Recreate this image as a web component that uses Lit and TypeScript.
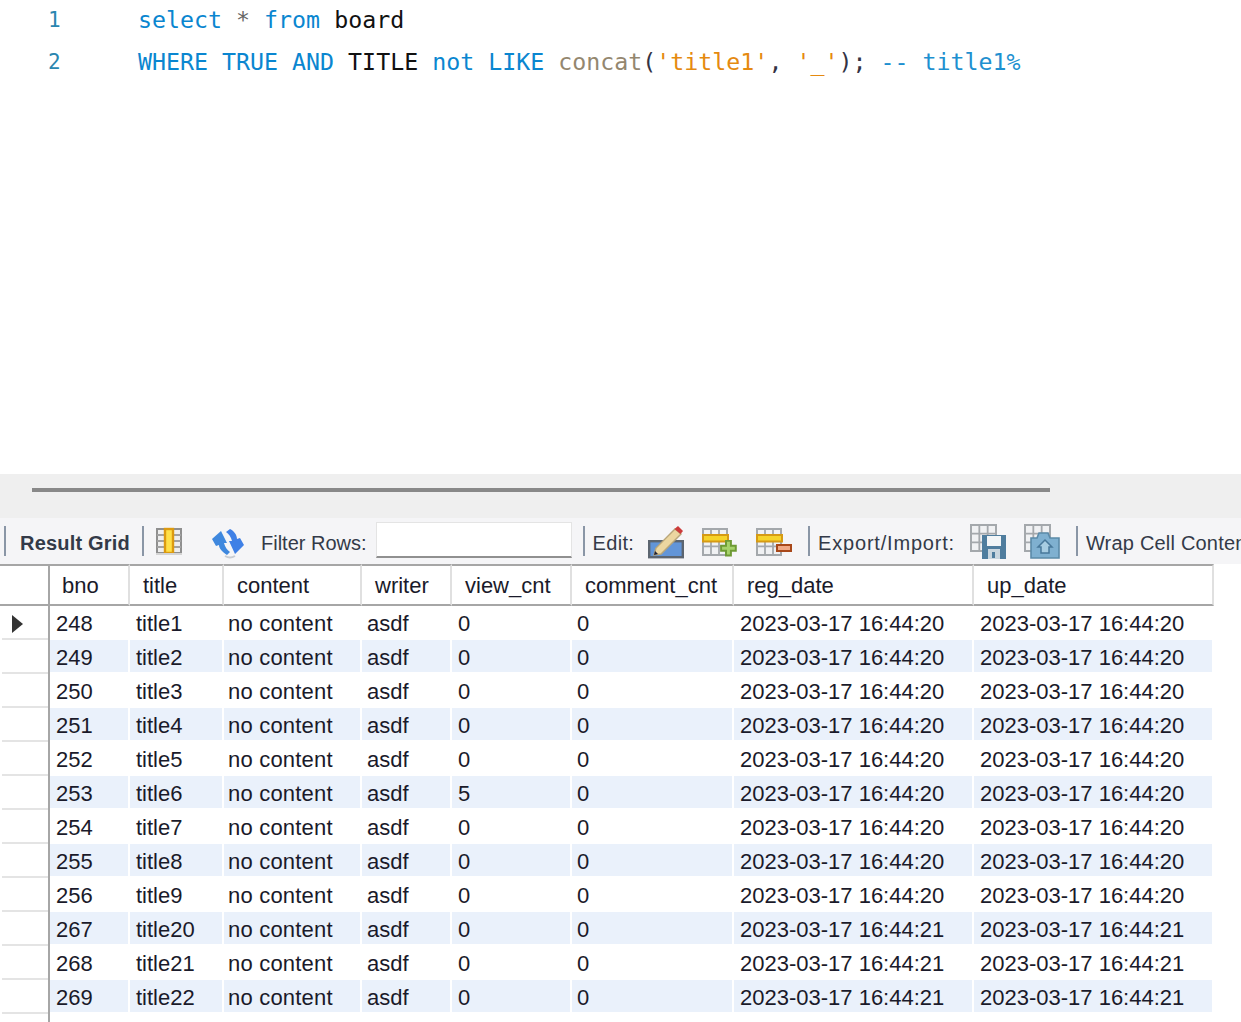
import { LitElement, html, css, svg } from "lit";
import { customElement } from "lit/decorators.js";

const d0 = "2023-03-17 16:44:20";
const d1 = "2023-03-17 16:44:21";
const rows = [
  ["248","title1","0",d0],["249","title2","0",d0],["250","title3","0",d0],["251","title4","0",d0],
  ["252","title5","0",d0],["253","title6","5",d0],["254","title7","0",d0],["255","title8","0",d0],
  ["256","title9","0",d0],["267","title20","0",d1],["268","title21","0",d1],["269","title22","0",d1],
];
const heads = ["bno","title","content","writer","view_cnt","comment_cnt","reg_date","up_date"];

const gridLines = (x:number,y:number,w:number,h:number,c="#a4a8ac") => svg`
  <rect x=${x} y=${y} width=${w} height=${h} fill="#f0f1f3" stroke=${c} stroke-width="2"/>
  <path d="M${x} ${y+h/3}H${x+w}M${x} ${y+2*h/3}H${x+w}M${x+w/3} ${y}V${y+h}M${x+2*w/3} ${y}V${y+h}" stroke=${c} stroke-width="1.8" fill="none"/>`;

const iconGrid = html`<svg width="26" height="36" viewBox="0 0 26 36"><rect x="1" y="5" width="24" height="24" fill="#eee" stroke="#8f8f8f" stroke-width="2"/><path d="M1 11H25M1 17H25M1 23H25" stroke="#a2a2a2" stroke-width="2"/><rect x="9" y="5" width="8" height="24" fill="#ffe048" stroke="#dc9a10" stroke-width="2.4"/><path d="M0 30H26" stroke="#d4d4d4" stroke-width="2"/></svg>`;
const iconRefresh = html`<svg width="32" height="36" viewBox="0 0 32 36"><path d="M0 15 L9 7 L15 19 L12 19 C13 23 15 26 18 28 L15 31 C10 28 7 24 7 21 L4 22 Z" fill="#3f88de"/><path d="M32 21 L23 30 L17 17 L20 17 C19 13 17 10 14 8 L18 5 C22 7 25 11 25 15 L28 14 Z" fill="#3f80e6"/><path d="M13 32 Q18 35 23 32" stroke="#c8ccd2" stroke-width="2" fill="none"/></svg>`;
const iconEdit = html`<svg width="36" height="36" viewBox="0 0 36 36"><rect x="1.2" y="17.2" width="33.6" height="16" fill="#6295d8" stroke="#5c6570" stroke-width="2.4"/><path d="M6 31 L8 24 L27 5 L33 10 L13 30 Z" fill="#ecd6a0" stroke="#b9a679" stroke-width="1.4"/><path d="M6 31 L7 27 L10 30 Z" fill="#223"/><path d="M26.5 5 L30 2 L35 7 L32.5 10 Z" fill="#cc3a3a"/></svg>`;
const iconAdd = html`<svg width="36" height="36" viewBox="0 0 36 36">${gridLines(1,5,24,26)}<rect x="1" y="11" width="25" height="6.5" fill="#f6d32a" stroke="#d69a14" stroke-width="2"/><path d="M25 17h5v5h5v5h-5v5h-5v-5h-5v-5h5z" fill="#a6d26a" stroke="#6e9a34" stroke-width="2" transform="translate(-.5 .2) scale(.98)"/></svg>`;
const iconDel = html`<svg width="36" height="36" viewBox="0 0 36 36">${gridLines(1,5,24,26)}<rect x="1" y="11" width="25" height="6.5" fill="#f6d32a" stroke="#d69a14" stroke-width="2"/><rect x="21" y="21" width="14" height="6" fill="#f0a884" stroke="#a8481a" stroke-width="2"/></svg>`;
const iconExport = html`<svg width="36" height="36" viewBox="0 0 36 36">${gridLines(1,1,25,26)}<path d="M12 11H36V35H12Z" fill="#4f7d9e"/><rect x="17" y="12" width="14" height="10" fill="#f2f5f7"/><rect x="18" y="25" width="12" height="10" fill="#c9d6df"/><rect x="22" y="28" width="3" height="6" fill="#4f7d9e"/></svg>`;
const iconImport = html`<svg width="36" height="36" viewBox="0 0 36 36">${gridLines(1,1,25,26)}<path d="M7 14 H13 L15 9 H24 L26 14 H35 V34 H7 Z" fill="#7fb0d0" stroke="#5b8aa8" stroke-width="1.6"/><path d="M21 16 L28 23 H25 V29 H17 V23 H14 Z" fill="#a8cde2" stroke="#48789a" stroke-width="1.5"/></svg>`;

@customElement("app-root")
export class AppRoot extends LitElement {
  static styles = css`
    :host { display: block; width: 1241px; height: 1022px; overflow: hidden; background: #fff; font-family: "Liberation Sans", Arial, sans-serif; color: #1a1a2a; }
    .editor { height: 474px; box-sizing: border-box; font: 23.27px/42px "DejaVu Sans Mono", monospace; color: #111; }
    .line { display: flex; height: 42px; white-space: pre; position: relative; top: -1px; }
    .num { width: 138px; padding-left: 48px; box-sizing: border-box; color: #2a86b0; font-size: 21px; }
    .kw { color: #0a86d0; } .fn { color: #94876f; } .str { color: #e58a10; } .cm { color: #1e90d0; } .pu { color: #334; } .st { color: #666; }
    .band { height: 44px; background: #efefef; box-sizing: border-box; padding: 14px 191px 0 32px; }
    .split { height: 4px; background: #888; }
    .toolbar { height: 46px; box-sizing: border-box; padding-top: 2px; background: #f5f5f7; display: flex; align-items: center; font-size: 20px; color: #333a48; white-space: nowrap; overflow: hidden; }
    .sep { width: 2px; height: 30px; margin-bottom: 2px; background: #8a96a6; flex: none; }
    .t { flex: none; padding-top: 2px; }
    .b { font-weight: bold; letter-spacing: .2px; }
    .ls1 { letter-spacing: .8px; } .ls2 { letter-spacing: .2px; } .ls3 { letter-spacing: .3px; }
    .ic { flex: none; display: flex; }
    .input { flex: none; width: 196px; height: 36px; margin-bottom: 4px; box-sizing: border-box; background: #fff; border: 1px solid #e4e4e4; border-bottom: 2px solid #909090; }
    .grid { width: 1214px; display: grid; grid-template-columns: 50px 80px 94px 138px 90px 120px 162px 240px 240px; }
    .hd { border-top: 2px solid #a6a6a6; border-bottom: 2px solid #a6a6a6; border-right: 2px solid #e0e0e0; background: #fff; font-size: 22px; line-height: 40px; padding-left: 13px; box-sizing: border-box; height: 42px; }
    .hd.first { padding-left: 12px; }
    .c { height: 34px; box-sizing: border-box; border-right: 2px solid #fff; border-bottom: 2px solid #fff; font-size: 22px; line-height: 36.5px; padding-left: 6px; white-space: nowrap; }
    .p4 { padding-left: 4px; letter-spacing: .2px; } .p5 { padding-left: 5px; }
    .alt { background: #eaf1fb; }
    .g { box-sizing: border-box; border-right: 2px solid #a6a6a6; background: #fff; }
    .hg { border-right-color: #a6a6a6; padding: 0; }
    .rg { height: 34px; background: linear-gradient(#e4e4e4, #e4e4e4) 2px 100% / 46px 2px no-repeat; display: flex; align-items: center; }
    .rg svg { margin-left: 12px; margin-top: 2px; }
    .fill { height: 8px; width: 50px; box-sizing: border-box; border-right: 2px solid #a6a6a6; }
  `;

  render() {
    return html`
      <div class="editor">
        <div class="line"><span class="num">1</span><span><span class="kw">select</span> <span class="st">*</span> <span class="kw">from</span> board</span></div>
        <div class="line"><span class="num">2</span><span><span class="kw">WHERE TRUE AND</span> TITLE <span class="kw">not LIKE</span> <span class="fn">concat</span><span class="pu">(</span><span class="str">'title1'</span><span class="pu">,</span> <span class="str">'_'</span><span class="pu">);</span> <span class="cm">-- title1%</span></span></div>
      </div>
      <div class="band"><div class="split"></div></div>
      <div class="toolbar">
        <span class="sep" style="margin-left:4px"></span>
        <span class="t b" style="margin-left:14px">Result Grid</span>
        <span class="sep" style="margin-left:12px"></span>
        <span class="ic" style="margin-left:12px">${iconGrid}</span>
        <span class="ic" style="margin-left:30px">${iconRefresh}</span>
        <span class="t" style="margin-left:17px">Filter Rows:</span>
        <span class="input" style="margin-left:9px"></span>
        <span class="sep" style="margin-left:11px"></span>
        <span class="t ls3" style="margin-left:8px">Edit:</span>
        <span class="ic" style="margin-left:14px">${iconEdit}</span>
        <span class="ic" style="margin-left:18px">${iconAdd}</span>
        <span class="ic" style="margin-left:18px">${iconDel}</span>
        <span class="sep" style="margin-left:16px"></span>
        <span class="t ls1" style="margin-left:8px">Export/Import:</span>
        <span class="ic" style="margin-left:15px">${iconExport}</span>
        <span class="ic" style="margin-left:18px">${iconImport}</span>
        <span class="sep" style="margin-left:16px"></span>
        <span class="t ls2" style="margin-left:8px">Wrap Cell Content</span>
      </div>
      <div class="grid">
        <div class="hd hg"></div>
        ${heads.map((h, i) => html`<div class="hd ${i === 0 ? "first" : ""}">${h}</div>`)}
        ${rows.map((r, i) => {
          const alt = i % 2 === 1 ? "alt" : "";
          return html`
            <div class="g rg">${i === 0 ? html`<svg width="12" height="18" viewBox="0 0 12 18"><path d="M0 0L11 9L0 18Z" fill="#333"/></svg>` : ""}</div>
            <div class="c ${alt}">${r[0]}</div>
            <div class="c ${alt}">${r[1]}</div>
            <div class="c p4 ${alt}">no content</div>
            <div class="c p5 ${alt}">asdf</div>
            <div class="c ${alt}">${r[2]}</div>
            <div class="c p5 ${alt}">0</div>
            <div class="c ${alt}">${r[3]}</div>
            <div class="c ${alt}">${r[3]}</div>`;
        })}
      </div>
      <div class="fill"></div>
    `;
  }
}
